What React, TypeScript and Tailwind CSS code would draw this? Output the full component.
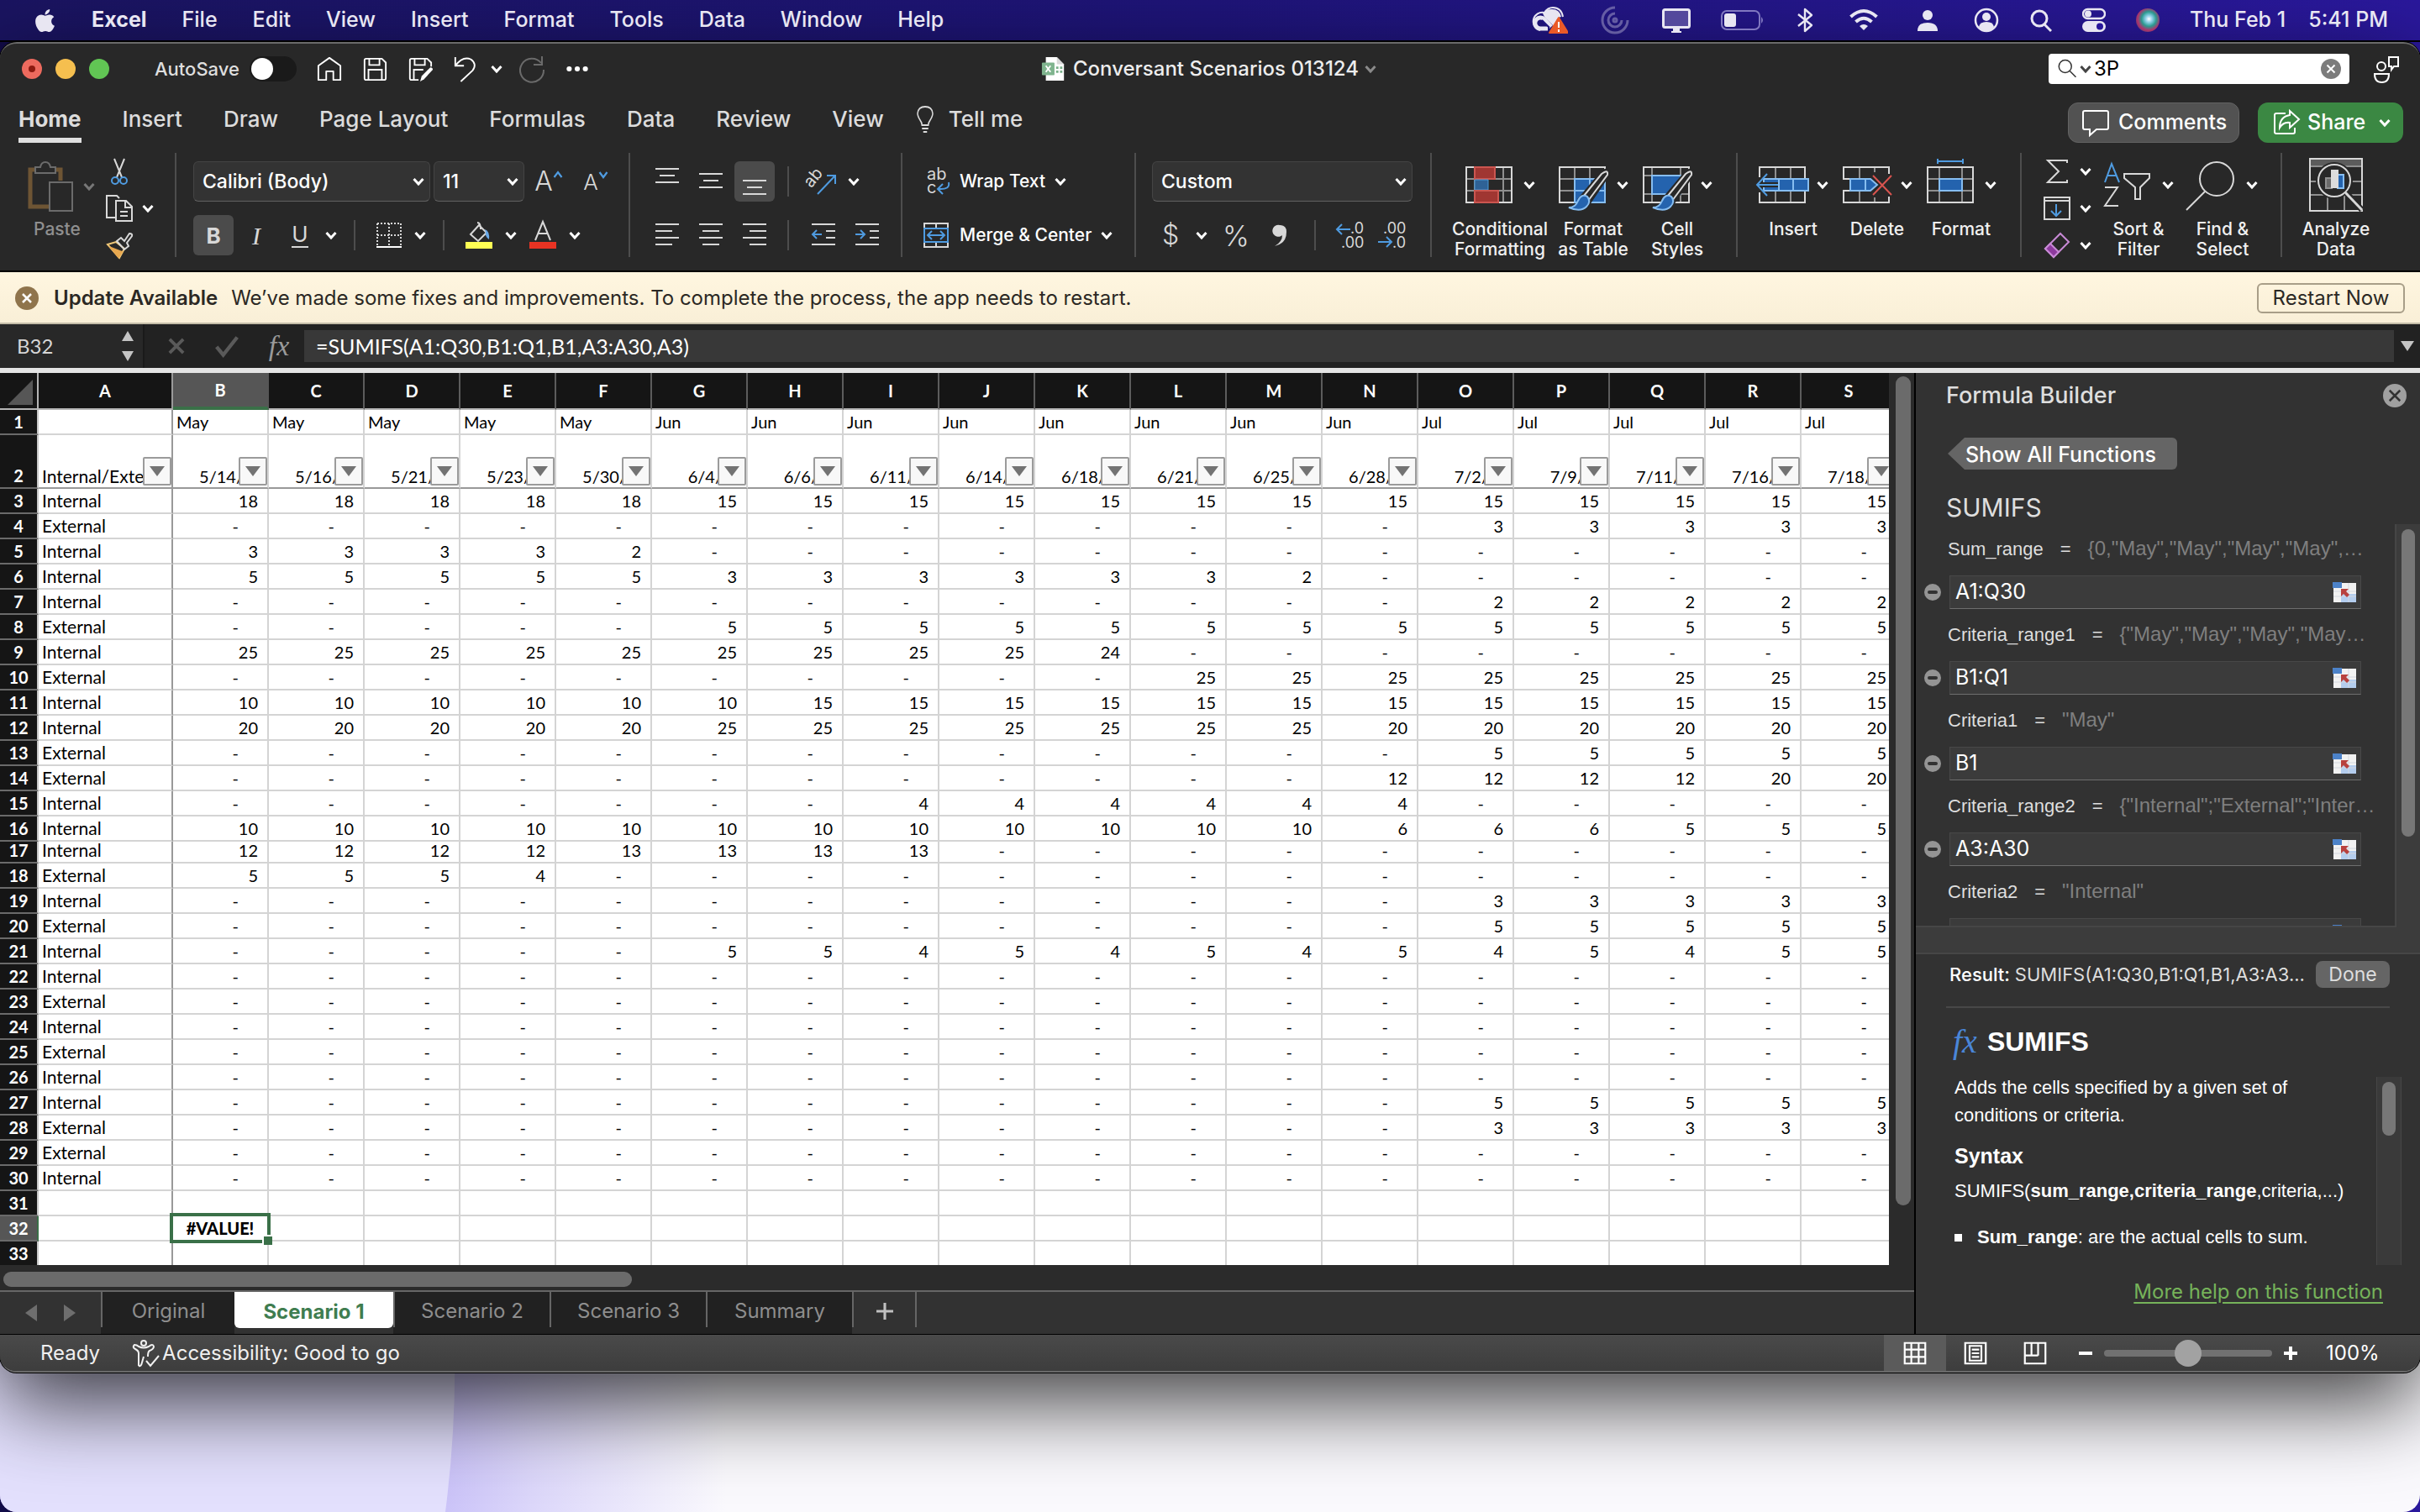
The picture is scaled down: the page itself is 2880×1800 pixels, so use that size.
import { useState, type ReactNode } from 'react';
import clsx from 'clsx';
import { FaApple } from 'react-icons/fa';

/* ------------------------------------------------------------------ */
/* Data                                                                */
/* ------------------------------------------------------------------ */

const MENUS = ['File', 'Edit', 'View', 'Insert', 'Format', 'Tools', 'Data', 'Window', 'Help'];

const RIBBON_TABS = ['Home', 'Insert', 'Draw', 'Page Layout', 'Formulas', 'Data', 'Review', 'View'];

const COLUMNS = 'BCDEFGHIJKLMNOPQRS'.split('');

const MONTHS = [
  'May', 'May', 'May', 'May', 'May',
  'Jun', 'Jun', 'Jun', 'Jun', 'Jun', 'Jun', 'Jun', 'Jun',
  'Jul', 'Jul', 'Jul', 'Jul', 'Jul',
];

const DATES = [
  '5/14/', '5/16/', '5/21/', '5/23/', '5/30/', '6/4/', '6/6/', '6/11/', '6/14/',
  '6/18/', '6/21/', '6/25/', '6/28/', '7/2/', '7/9/', '7/11/', '7/16/', '7/18/',
];

type Run = [value: number, count: number];

// each run is [value, number of columns], zero shows as a dash
const DATA: { row: number; kind: 'Internal' | 'External'; runs: Run[] }[] = [
  { row: 3, kind: 'Internal', runs: [[18, 5], [15, 13]] },
  { row: 4, kind: 'External', runs: [[0, 13], [3, 5]] },
  { row: 5, kind: 'Internal', runs: [[3, 4], [2, 1], [0, 13]] },
  { row: 6, kind: 'Internal', runs: [[5, 5], [3, 6], [2, 1], [0, 6]] },
  { row: 7, kind: 'Internal', runs: [[0, 13], [2, 5]] },
  { row: 8, kind: 'External', runs: [[0, 5], [5, 13]] },
  { row: 9, kind: 'Internal', runs: [[25, 9], [24, 1], [0, 8]] },
  { row: 10, kind: 'External', runs: [[0, 10], [25, 8]] },
  { row: 11, kind: 'Internal', runs: [[10, 6], [15, 12]] },
  { row: 12, kind: 'Internal', runs: [[20, 5], [25, 7], [20, 6]] },
  { row: 13, kind: 'External', runs: [[0, 13], [5, 5]] },
  { row: 14, kind: 'External', runs: [[0, 12], [12, 4], [20, 2]] },
  { row: 15, kind: 'Internal', runs: [[0, 7], [4, 6], [0, 5]] },
  { row: 16, kind: 'Internal', runs: [[10, 12], [6, 3], [5, 3]] },
  { row: 17, kind: 'Internal', runs: [[12, 4], [13, 4], [0, 10]] },
  { row: 18, kind: 'External', runs: [[5, 3], [4, 1], [0, 14]] },
  { row: 19, kind: 'Internal', runs: [[0, 13], [3, 5]] },
  { row: 20, kind: 'External', runs: [[0, 13], [5, 5]] },
  {
    row: 21,
    kind: 'Internal',
    runs: [[0, 5], [5, 2], [4, 1], [5, 1], [4, 1], [5, 1], [4, 1], [5, 1], [4, 1], [5, 1], [4, 1], [5, 2]],
  },
  { row: 22, kind: 'Internal', runs: [[0, 18]] },
  { row: 23, kind: 'External', runs: [[0, 18]] },
  { row: 24, kind: 'Internal', runs: [[0, 18]] },
  { row: 25, kind: 'External', runs: [[0, 18]] },
  { row: 26, kind: 'Internal', runs: [[0, 18]] },
  { row: 27, kind: 'Internal', runs: [[0, 13], [5, 5]] },
  { row: 28, kind: 'External', runs: [[0, 13], [3, 5]] },
  { row: 29, kind: 'External', runs: [[0, 18]] },
  { row: 30, kind: 'Internal', runs: [[0, 18]] },
];

const ARGUMENTS = [
  { name: 'Sum_range', preview: '{0,"May","May","May","May",…', value: 'A1:Q30' },
  { name: 'Criteria_range1', preview: '{"May","May","May","May…', value: 'B1:Q1' },
  { name: 'Criteria1', preview: '"May"', value: 'B1' },
  { name: 'Criteria_range2', preview: '{"Internal";"External";"Inter…', value: 'A3:A30' },
  { name: 'Criteria2', preview: '"Internal"', value: 'A3' },
];

const SHEETS = [
  { name: 'Original', width: 'w-[159px]' },
  { name: 'Scenario 1', width: 'w-[189px]' },
  { name: 'Scenario 2', width: 'w-[186px]' },
  { name: 'Scenario 3', width: 'w-[186px]' },
  { name: 'Summary', width: 'w-[174px]' },
];

/* ------------------------------------------------------------------ */
/* Small pieces                                                        */
/* ------------------------------------------------------------------ */

function Chevron({ className = 'text-white' }: { className?: string }) {
  return (
    <svg viewBox="0 0 20 20" className={clsx('size-5 shrink-0', className)} fill="none" stroke="currentColor" strokeWidth="3" aria-hidden="true">
      <path d="M4.5 7l5.5 6 5.5-6" />
    </svg>
  );
}

function Icon({ className = 'size-8', box = 32, children }: { className?: string; box?: number; children: ReactNode }) {
  return (
    <svg
      viewBox={`0 0 ${box} ${box}`}
      className={clsx('shrink-0 overflow-visible', className)}
      fill="none"
      stroke="currentColor"
      strokeWidth="2"
      aria-hidden="true"
    >
      {children}
    </svg>
  );
}

function Tool({ label, className = 'w-12', active = false, children }: { label: string; className?: string; active?: boolean; children: ReactNode }) {
  return (
    <button
      type="button"
      aria-label={label}
      className={clsx('flex h-12 shrink-0 items-center justify-center rounded-md text-[#d8d8d8]', active && 'bg-[#4b4b4b]', className)}
    >
      {children}
    </button>
  );
}

function More({ label }: { label: string }) {
  return (
    <button type="button" aria-label={label} className="flex h-12 w-6 shrink-0 items-center justify-center">
      <Chevron />
    </button>
  );
}

function MiniDivider() {
  return <div className="mx-[15px] h-9 w-[2px] shrink-0 bg-[#4d4d4d]" />;
}

function Group({ className, children }: { className?: string; children: ReactNode }) {
  return <div className={clsx('flex h-[124px] shrink-0 border-r-2 border-[#4d4d4d]', className)}>{children}</div>;
}

function BigTool({ lines, className = 'w-[100px]', menu = true, children }: { lines: string[]; className?: string; menu?: boolean; children: ReactNode }) {
  return (
    <button type="button" className={clsx('flex shrink-0 flex-col items-center gap-[9px] pt-[6px]', className)}>
      <span className="flex items-center gap-[6px] text-[#d8d8d8]">
        <Icon box={64} className="size-16">
          {children}
        </Icon>
        {menu && <Chevron />}
      </span>
      <span className="text-[21px] leading-6 font-medium text-[#f0f0f0]">
        {lines.map((line) => (
          <span key={line} className="block whitespace-nowrap">
            {line}
          </span>
        ))}
      </span>
    </button>
  );
}

function Lines({ rows }: { rows: [number, number, number][] }) {
  return (
    <Icon>
      {rows.map(([x1, x2, y]) => (
        <path key={y} d={`M${x1} ${y}H${x2}`} />
      ))}
    </Icon>
  );
}

function Brush() {
  return (
    <>
      <path d="M31 48L56 18q7-5 7 0L40 52z" fill="#282828" stroke="#282828" strokeWidth="6" />
      <path d="M34 45L55 19q8-6 7 1L39 51" fill="#282828" />
      <path d="M16 59q8 0 11-8 4-9 11-5 5 6-1 12-7 7-21 1z" fill="#2463ae" stroke="#86bdf0" />
    </>
  );
}

/* ------------------------------------------------------------------ */
/* macOS menu bar                                                      */
/* ------------------------------------------------------------------ */

function MenuBar() {
  return (
    <header className="flex h-[50px] items-center border-b-2 border-black bg-linear-to-r from-[#1a1460] via-[#1e1478] to-[#2a189c] pr-[38px] pl-[38px] text-[25px] font-medium text-[#e8e6f2]">
      <button type="button" aria-label="Apple menu" className="mr-10">
        <FaApple className="size-[31px]" />
      </button>
      <nav className="flex gap-[42px]">
        <button type="button" className="font-bold">Excel</button>
        {MENUS.map((menu) => (
          <button key={menu} type="button">
            {menu}
          </button>
        ))}
      </nav>
      <div className="ml-auto flex items-center gap-9">
        {/* Creative Cloud with a warning badge */}
        <svg viewBox="0 0 44 34" className="h-[34px] w-11" fill="none" stroke="currentColor" aria-hidden="true">
          <path d="M11 29a10.500 10.500 0 1 1 5-21q4-6 10-6 10 0 12 11" strokeWidth="2" />
          <path d="M14 9q4-5 11-5 9 0 11 9-6 0-8 12L16 13z" fill="currentColor" stroke="none" />
          <path d="M20 27h-9a6.500 6.500 0 1 1 5-11l8 9" strokeWidth="5" />
          <path d="M22 26L13 17" stroke="#1f1480" strokeWidth="2" />
          <path d="M33 14l11 18H22z" fill="#ea5a28" stroke="#ea5a28" strokeLinejoin="round" strokeWidth="2" />
          <path d="M33 19v7M33 28v3" stroke="#fff" strokeWidth="2" />
        </svg>
        <svg viewBox="0 0 40 34" className="h-[34px] w-10 opacity-35" fill="none" stroke="currentColor" strokeWidth="3" aria-hidden="true">
          <path d="M20 2a15 15 0 1 0 15 15M20 9a8 8 0 1 0 8 8" />
          <circle cx="20" cy="17" r="2" />
        </svg>
        <svg viewBox="0 0 34 32" className="h-8 w-[34px]" aria-hidden="true">
          <rect x="1.500" y="3.500" width="31" height="21" rx="2" fill="#54499c" stroke="currentColor" strokeWidth="3" />
          <path d="M13 25h8v4h2v2H11v-2h2z" fill="currentColor" />
        </svg>
        <svg viewBox="0 0 52 26" className="h-[26px] w-[52px]" aria-hidden="true">
          <rect x="1" y="2" width="45" height="22" rx="6" fill="none" stroke="#8078c0" strokeWidth="2" />
          <rect x="4" y="5" width="14" height="16" rx="3" fill="currentColor" />
          <path d="M48 9q4 4 0 8z" fill="#8078c0" />
        </svg>
        <svg viewBox="0 0 24 32" className="h-8 w-6" fill="none" stroke="currentColor" strokeWidth="2.400" strokeLinejoin="round" aria-hidden="true">
          <path d="M4 9l16 13-8 7V3l8 7L4 23" />
        </svg>
        <svg viewBox="0 0 44 32" className="h-8 w-11" fill="none" stroke="currentColor" strokeWidth="4" aria-hidden="true">
          <path d="M6.500 12q15.500-14 31 0M12.500 18q9.500-8.500 19 0" />
          <path d="M22 28l-5-5q5-4 10 0z" fill="currentColor" stroke="none" />
        </svg>
        <svg viewBox="0 0 36 32" className="h-8 w-9" fill="currentColor" aria-hidden="true">
          <circle cx="18" cy="10" r="6" />
          <path d="M6 29q0-10 12-10t12 10z" />
        </svg>
        <svg viewBox="0 0 32 32" className="size-8" fill="currentColor" aria-hidden="true">
          <circle cx="16" cy="16" r="13" fill="none" stroke="currentColor" strokeWidth="2.500" />
          <circle cx="16" cy="12" r="5" />
          <path d="M7 24q1-6 9-6t9 6q-4 5-9 5t-9-5z" />
        </svg>
        <svg viewBox="0 0 26 32" className="h-8 w-[26px]" fill="none" stroke="currentColor" strokeWidth="3" aria-hidden="true">
          <circle cx="11" cy="14" r="9" />
          <path d="M17 21l8 8" />
        </svg>
        <svg viewBox="0 0 28 32" className="h-8 w-7" aria-hidden="true">
          <rect x="1" y="3" width="26" height="11" rx="5.500" fill="none" stroke="currentColor" strokeWidth="2.400" />
          <circle cx="7" cy="8.500" r="4" fill="currentColor" />
          <rect x="0" y="17" width="28" height="13" rx="6.500" fill="currentColor" />
          <circle cx="21" cy="23.500" r="4" fill="#28179a" />
        </svg>
        <span className="size-7 rounded-full bg-[radial-gradient(circle_at_55%_45%,#ffffff_0%,#8fd0e8_18%,#2a9a90_40%,#b0306c_62%,#3a4a70_85%)]" />
        <span className="flex w-[236px] justify-between">
          <span>Thu Feb 1</span>
          <span>5:41 PM</span>
        </span>
      </div>
    </header>
  );
}

/* ------------------------------------------------------------------ */
/* Title bar and tabs                                                  */
/* ------------------------------------------------------------------ */

function TitleBar() {
  return (
    <div className="grid h-[60px] grid-cols-[1fr_auto_1fr] items-center">
      <div className="flex items-center pl-[26px]">
        <div className="flex gap-4">
          <button type="button" aria-label="Close" className="flex size-6 items-center justify-center rounded-full bg-[#ed6a5e]">
            <span className="size-2 rounded-full bg-[#8c1a10]" />
          </button>
          <button type="button" aria-label="Minimize" className="size-6 rounded-full bg-[#f5bf4f]" />
          <button type="button" aria-label="Zoom" className="size-6 rounded-full bg-[#61c554]" />
        </div>
        <label className="ml-[54px] flex items-center gap-3 text-[22px] font-medium text-[#dedede]">
          AutoSave
          <input type="checkbox" className="peer sr-only" />
          <span className="flex h-[30px] w-14 items-center rounded-full bg-[#1a1a1a] px-[2px]">
            <span className="size-[26px] rounded-full bg-white" />
          </span>
        </label>
        <div className="ml-6 flex items-center gap-6 text-white">
          <button type="button" aria-label="Home">
            <Icon className="size-[30px]">
              <path d="M2 12L16 2l14 10v18h-9V19h-9v11H2z" strokeLinejoin="round" />
            </Icon>
          </button>
          <button type="button" aria-label="Save">
            <Icon className="size-[30px]">
              <path d="M3 5q0-2 2-2h20l5 5v20q0 2-2 2H5q-2 0-2-2zM9 3v8h13V3M8 30V17h17v13" />
            </Icon>
          </button>
          <button type="button" aria-label="Save As">
            <Icon className="size-[30px]">
              <path d="M14 30H5q-2 0-2-2V5q0-2 2-2h20l5 5v5M9 3v8h13V3M8 30V17h12" />
              <path d="M16 32l2-7 11-11q3 0 3 3L21 29z" fill="currentColor" stroke="none" />
            </Icon>
          </button>
          <span className="-mr-2 flex items-center gap-3">
            <button type="button" aria-label="Undo">
              <Icon className="size-[30px]">
                <path d="M3 1v11h11M3 12q10-13 20-8 8 6 2 14L10 32" />
              </Icon>
            </button>
            <Chevron />
          </span>
          <button type="button" aria-label="Redo" className="text-[#6a6a6a]">
            <Icon>
              <path d="M28 1v10H18M27 9A14 14 0 1 0 30 17" />
            </Icon>
          </button>
          <button type="button" aria-label="More commands">
            <Icon className="size-7">
              <g fill="currentColor" stroke="none">
                <circle cx="5" cy="16" r="3.500" />
                <circle cx="16" cy="16" r="3.500" />
                <circle cx="27" cy="16" r="3.500" />
              </g>
            </Icon>
          </button>
        </div>
      </div>
      <button type="button" className="flex items-center gap-1 text-[24px] font-medium text-[#ededed]">
        <Icon className="mr-1 size-[30px]">
          <path d="M6 1h14l9 9v21H6z" fill="#fff" stroke="none" />
          <path d="M20 1l9 9h-9z" fill="#d8d8d8" stroke="none" />
          <path d="M19 13h3v3h-3zM24 13h3v3h-3zM19 18h3v3h-3zM24 18h3v3h-3z" fill="#7ab08a" stroke="none" />
          <rect x="1" y="8" width="16" height="16" rx="1" fill="#7fb48e" stroke="none" />
          <path d="M6 12l6 8M12 12l-6 8" stroke="#fff" />
        </Icon>
        Conversant Scenarios 013124
        <Chevron className="text-[#8a8a8a]" />
      </button>
      <div className="flex items-center justify-end gap-7 pr-6">
        <div className="flex h-9 w-[358px] items-center rounded bg-white px-[10px] text-[#333]">
          <Icon className="size-6">
            <circle cx="13" cy="12" r="10" />
            <path d="M20 19l10 10" />
          </Icon>
          <Chevron className="text-[#444]" />
          <input
            type="text"
            aria-label="Search workbook"
            defaultValue="3P"
            className="w-0 min-w-0 flex-1 text-[24px] text-black outline-none"
          />
          <button type="button" aria-label="Clear search" className="flex size-6 items-center justify-center rounded-full bg-[#7c7c7c] text-white">
            <Icon className="size-4">
              <path d="M7 7l18 18M25 7L7 25" strokeWidth="4" />
            </Icon>
          </button>
        </div>
        <button type="button" aria-label="Share presence" className="text-white">
          <Icon>
            <circle cx="10" cy="13" r="5" />
            <path d="M2 22h17q0 10-8.500 10T2 22zM19 2h11v11h-5l-3 4v-4h-3z" />
          </Icon>
        </button>
      </div>
    </div>
  );
}

function RibbonTabs({ active, onSelect }: { active: string; onSelect: (tab: string) => void }) {
  return (
    <div className="flex h-[70px] items-start justify-between pt-[10px]">
      <nav className="flex gap-[49px] pl-[22px] text-[26px] leading-10 font-medium text-[#dcdcdc]">
        {RIBBON_TABS.map((tab) => (
          <button
            key={tab}
            type="button"
            onClick={() => onSelect(tab)}
            className={clsx('border-b-6 pb-[2px]', tab === active ? 'border-[#e0e0e0] font-bold' : 'border-transparent')}
          >
            {tab}
          </button>
        ))}
        <button type="button" className="-ml-4 flex h-10 items-center gap-3">
          <Icon>
            <path d="M11 23q0-3-3-6-4-5-4-8Q5 1 16 1t12 8q0 3-4 8-3 3-3 6zM11 27h10M13 31h6" transform="translate(4) scale(.75 1)" />
          </Icon>
          Tell me
        </button>
      </nav>
      <div className="flex gap-[22px] pr-5 text-[25px] font-medium text-white">
        <button type="button" className="flex h-12 w-[204px] items-center gap-[11px] rounded-xl border border-[#636363] bg-[#525252] pl-4">
          <Icon>
            <path d="M3 2h26q2 0 2 2v18q0 2-2 2H17l-8 7v-7H3q-2 0-2-2V4q0-2 2-2z" />
          </Icon>
          Comments
        </button>
        <button type="button" className="flex h-12 w-[173px] items-center gap-[9px] rounded-xl bg-[#3b8843] pl-[18px]">
          <Icon>
            <path d="M15 5H4q-2 0-2 2v20q0 2 2 2h20q2 0 2-2v-5M20 2l11 10-11 10v-6q-8-1-12 6 0-13 12-15z" />
          </Icon>
          Share
          <Chevron className="ml-1" />
        </button>
      </div>
    </div>
  );
}

/* ------------------------------------------------------------------ */
/* Ribbon                                                              */
/* ------------------------------------------------------------------ */

function SelectBox({ label, value, className }: { label: string; value: string; className: string }) {
  return (
    <div className={clsx('relative h-12 shrink-0', className)}>
      <select
        aria-label={label}
        defaultValue={value}
        className="h-full w-full appearance-none rounded-md border border-[#444] border-b-[#606060] bg-[#333] pl-[10px] text-[23px] font-medium text-white"
      >
        <option>{value}</option>
      </select>
      <div className="pointer-events-none absolute inset-y-0 right-1 flex items-center">
        <Chevron />
      </div>
    </div>
  );
}

function Ribbon() {
  return (
    <div className="flex h-[142px] border-b-2 border-black">
      {/* Clipboard */}
      <Group className="w-[210px] gap-[10px] pl-8">
        <button type="button" className="flex w-[84px] flex-col items-start gap-[9px] pt-[10px] text-[21px] leading-6 font-medium text-[#8f8f8f]">
          <span className="flex h-[60px] items-center gap-1">
            <Icon box={60} className="size-[60px] text-[#6b6b6b]">
              <path d="M9 10H4v44h24" stroke="#6e5534" strokeWidth="5" />
              <path d="M34 10h6v13" stroke="#6e5534" strokeWidth="5" />
              <path d="M10 14V7h6q1-6 6-6t6 6h6v7z" />
              <path d="M27 25h27v34H27z" fill="#282828" />
            </Icon>
            <Chevron className="text-[#777]" />
          </span>
          <span className="pl-2">Paste</span>
        </button>
        <div className="flex flex-col gap-3 pt-[6px] text-[#d8d8d8]">
          <button type="button" aria-label="Cut">
            <Icon>
              <path d="M10 1l9 22M22 1l-9 22" />
              <g stroke="#4f9be0">
                <circle cx="11" cy="27" r="4" />
                <circle cx="21" cy="27" r="4" />
              </g>
            </Icon>
          </button>
          <button type="button" aria-label="Copy" className="flex items-center gap-2">
            <Icon>
              <path d="M11 27H1V1h12l3 3M12 7h12l7 7v17H12zM23 7v8h8M17 20h9M17 25h9" />
            </Icon>
            <Chevron />
          </button>
          <button type="button" aria-label="Format Painter">
            <Icon>
              <path d="M2 15l10-3 10 8-6 11z" stroke="#f0c878" />
              <path d="M6 19l13 5-4 6z" fill="#e8a850" stroke="#e8a850" />
              <path d="M13 11l5-4 4 4 6-9q4 0 3 3l-6 8 2 4-5 4z" />
            </Icon>
          </button>
        </div>
      </Group>

      {/* Font */}
      <Group className="w-[540px] flex-col gap-4 pt-[10px] pl-5">
        <div className="flex">
          <SelectBox label="Font" value="Calibri (Body)" className="mr-1 w-[282px]" />
          <SelectBox label="Font size" value="11" className="w-[108px]" />
          <Tool label="Increase font size" className="w-[58px] text-[32px] font-light">
            A
            <Icon className="mb-4 size-3">
              <path d="M4 24L16 8l12 16" stroke="#4f9be0" strokeWidth="6" />
            </Icon>
          </Tool>
          <Tool label="Decrease font size" className="w-[54px] text-[26px] font-light">
            A
            <Icon className="mb-4 size-3">
              <path d="M4 8l12 16L28 8" stroke="#4f9be0" strokeWidth="6" />
            </Icon>
          </Tool>
        </div>
        <div className="flex items-center">
          <Tool label="Bold" active className="w-12 text-[26px] font-bold">B</Tool>
          <Tool label="Italic" className="w-[54px] font-['Liberation_Serif',serif] text-[30px] italic">I</Tool>
          <Tool label="Underline" className="w-[50px] text-[26px]">
            <span className="border-b-2 border-[#d8d8d8] leading-7">U</span>
          </Tool>
          <More label="Underline styles" />
          <MiniDivider />
          <Tool label="Borders" className="w-[50px]">
            <Icon>
              <path d="M2 2h28M2 16h28M2 2v27M16 2v27M30 2v27" strokeDasharray="2 2" />
              <path d="M1 30h30" stroke="#fff" />
            </Icon>
          </Tool>
          <More label="Border styles" />
          <MiniDivider />
          <Tool label="Fill colour" className="w-[52px]">
            <Icon>
              <path d="M14 1q4 0 4 8M16 4L6 15l9 8 10-10z" />
              <path d="M23 9q6 2 5 12-5-3-4-9z" fill="#6aa9e8" stroke="none" />
              <path d="M0 24h32v8H0z" fill="#ffff54" stroke="none" />
            </Icon>
          </Tool>
          <More label="Fill colours" />
          <Tool label="Font colour" className="w-[52px]">
            <Icon>
              <path d="M7 22L16 0l9 22M10 14h12" />
              <path d="M0 24h32v8H0z" fill="#e93323" stroke="none" />
            </Icon>
          </Tool>
          <More label="Font colours" />
        </div>
      </Group>

      {/* Alignment */}
      <Group className="w-[324px] flex-col gap-4 pt-[10px] pl-5">
        <div className="flex items-center">
          <div className="flex gap-1">
            <Tool label="Top align">
              <Lines rows={[[2, 30, 1], [7, 25, 9], [2, 30, 17]]} />
            </Tool>
            <Tool label="Middle align">
              <Lines rows={[[2, 30, 7], [7, 25, 15], [2, 30, 23]]} />
            </Tool>
            <Tool label="Bottom align" active>
              <Lines rows={[[2, 30, 15], [7, 25, 23], [2, 30, 31]]} />
            </Tool>
          </div>
          <MiniDivider />
          <Tool label="Orientation" className="w-[50px]">
            <Icon>
              <text x="0" y="20" transform="rotate(-50 6 20)" className="text-[20px]" fill="currentColor" stroke="none">ab</text>
              <path d="M10 31L31 9M21 9h10v10" stroke="#4f9be0" />
            </Icon>
          </Tool>
          <More label="Orientations" />
        </div>
        <div className="flex items-center">
          <div className="flex gap-1">
            <Tool label="Align left">
              <Lines rows={[[2, 30, 3], [2, 22, 11], [2, 30, 19], [2, 22, 27]]} />
            </Tool>
            <Tool label="Centre">
              <Lines rows={[[2, 30, 3], [6, 26, 11], [2, 30, 19], [6, 26, 27]]} />
            </Tool>
            <Tool label="Align right">
              <Lines rows={[[2, 30, 3], [10, 30, 11], [2, 30, 19], [10, 30, 27]]} />
            </Tool>
          </div>
          <MiniDivider />
          <Tool label="Decrease indent" className="w-[52px]">
            <Icon>
              <path d="M2 3h28M19 11h11M19 19h11M2 27h28" />
              <path d="M14 15H3M8 10l-5 5 5 5" stroke="#4f9be0" />
            </Icon>
          </Tool>
          <Tool label="Increase indent" className="w-[52px]">
            <Icon>
              <path d="M2 3h28M19 11h11M19 19h11M2 27h28" />
              <path d="M2 15h11M8 10l5 5-5 5" stroke="#4f9be0" />
            </Icon>
          </Tool>
        </div>
      </Group>

      <Group className="w-[278px] flex-col gap-4 pt-[10px] pl-6 text-[21px] font-medium text-white">
        <button type="button" className="flex h-12 items-center gap-2">
          <Icon className="mr-1 size-8 text-[#d8d8d8]">
            <text x="5" y="14" className="text-[20px] font-normal" fill="currentColor" stroke="none">ab</text>
            <text x="5" y="30" className="text-[20px] font-normal" fill="currentColor" stroke="none">c</text>
            <path d="M31 17q2 9-12 8M24 19l-6 6 6 6" stroke="#4f9be0" />
          </Icon>
          Wrap Text
          <Chevron />
        </button>
        <button type="button" className="flex h-12 items-center gap-2">
          <Icon className="mr-1 size-8 text-[#d8d8d8]">
            <path d="M2 2h28v28H2zM16 2v6M16 24v6" />
            <path d="M2 8h28v16H2zM6 16h20M11 11l-5 5 5 5M21 11l5 5-5 5" stroke="#4f9be0" />
          </Icon>
          Merge &amp; Center
          <Chevron />
        </button>
      </Group>

      {/* Number */}
      <Group className="w-[352px] flex-col gap-4 pt-[10px] pl-[19px]">
        <SelectBox label="Number format" value="Custom" className="w-[310px]" />
        <div className="flex items-center">
          <Tool label="Accounting format" className="w-11 text-[32px] font-light">$</Tool>
          <span className="w-[3px]" />
          <More label="Currencies" />
          <span className="w-[3px]" />
          <Tool label="Percent style" className="w-[52px] text-[34px] font-light">%</Tool>
          <Tool label="Comma style" className="w-[52px]">
            <Icon>
              <path d="M16 4a7 7 0 1 0 3 12q0 8-9 13 14-3 14-17 0-8-8-8z" fill="currentColor" stroke="none" />
            </Icon>
          </Tool>
          <MiniDivider />
          <Tool label="Increase decimal" className="w-[50px]">
            <Icon>
              <text x="17" y="14" className="text-[18px]" fill="currentColor" stroke="none">.0</text>
              <text x="6" y="31" className="text-[18px]" fill="currentColor" stroke="none">.00</text>
              <path d="M17 9H1M7 3L1 9l6 6" stroke="#4f9be0" />
            </Icon>
          </Tool>
          <Tool label="Decrease decimal" className="w-[50px]">
            <Icon>
              <text x="6" y="14" className="text-[18px]" fill="currentColor" stroke="none">.00</text>
              <text x="17" y="31" className="text-[18px]" fill="currentColor" stroke="none">.0</text>
              <path d="M0 24h16M10 18l6 6-6 6" stroke="#4f9be0" />
            </Icon>
          </Tool>
        </div>
      </Group>

      {/* Styles */}
      <Group className="w-[364px] pl-5">
        <BigTool lines={['Conditional', 'Formatting']} className="w-[122px]">
          <path d="M15 11v42M49 11v42M5 25h54M5 39h54" stroke="#8f8f8f" />
          <path d="M5 11h54v42H5z" />
          <path d="M15 11h24v14H15z" fill="#a03632" stroke="#cb5650" />
          <path d="M15 26h16v12H15z" fill="#2f6296" stroke="#4a9bd8" strokeWidth="1" />
          <path d="M15 39h28v14H15z" fill="#a03632" stroke="#cb5650" />
        </BigTool>
        <BigTool lines={['Format', 'as Table']}>
          <path d="M23 11v42M41 11v42M5 25h54M5 39h54" stroke="#8f8f8f" />
          <path d="M5 11h54v42H5z" />
          <path d="M23 25h36v28H23zM41 25v28M23 39h36" fill="#2463ae" stroke="#86bdf0" />
          <Brush />
        </BigTool>
        <BigTool lines={['Cell', 'Styles']}>
          <path d="M15 11v42M49 11v42M5 21h54M5 43h54" stroke="#8f8f8f" />
          <path d="M5 11h54v42H5z" />
          <path d="M15 21h34v22H15z" fill="#2463ae" stroke="#86bdf0" />
          <Brush />
        </BigTool>
      </Group>

      {/* Cells */}
      <Group className="w-[338px] pl-4">
        <BigTool lines={['Insert']}>
          <path d="M24 11v42M42 11v42" stroke="#8f8f8f" />
          <path d="M5 23V11h54v42H5V41" />
          <path d="M10 25h53v14H10zM28 25v14M45 25v14" fill="#2463ae" stroke="#86bdf0" />
          <path d="M27 32H4" stroke="#282828" strokeWidth="6" />
          <path d="M27 32H2M14 19L2 32l12 13" stroke="#4f9be0" />
        </BigTool>
        <BigTool lines={['Delete']}>
          <path d="M24 11v42M42 11v6M42 47v6" stroke="#8f8f8f" />
          <path d="M59 19v-8H5v14h9M59 46v7H5V39h9" />
          <path d="M13 25h24l8 7-8 7H13zM31 25v14" fill="#2463ae" stroke="#86bdf0" />
          <path d="M40 21l22 23M62 21L40 44" stroke="#d9544f" />
        </BigTool>
        <BigTool lines={['Format']}>
          <path d="M19 11v42M46 11v42M5 25h54M5 39h54" stroke="#8f8f8f" />
          <path d="M5 11h54v42H5z" />
          <path d="M19 25h27v14H19z" fill="#2463ae" stroke="#86bdf0" />
          <path d="M17 4h30M17 1v6M47 1v6" stroke="#4f9be0" />
        </BigTool>
      </Group>

      {/* Editing */}
      <Group className="w-[310px] pl-[26px]">
        <div className="flex w-[63px] flex-col gap-3 pt-[6px] text-[#d8d8d8]">
          <button type="button" aria-label="AutoSum" className="flex items-center gap-2">
            <Icon>
              <path d="M28 6V3H5l13 13L5 29h23v-3" />
            </Icon>
            <Chevron />
          </button>
          <button type="button" aria-label="Fill" className="flex items-center gap-2">
            <Icon>
              <path d="M1 3h30v26H1zM1 7h30" />
              <path d="M15 11v14M9 19l6 6 6-6" stroke="#4f9be0" />
            </Icon>
            <Chevron />
          </button>
          <button type="button" aria-label="Clear" className="flex items-center gap-2">
            <Icon>
              <path d="M20 2l10 10-18 18L2 20z" stroke="#c88ad6" />
              <path d="M8 14l10 10-6 6L2 20z" fill="#8d3a9e" stroke="#c88ad6" />
            </Icon>
            <Chevron />
          </button>
        </div>
        <BigTool lines={['Sort &', 'Filter']}>
          <path d="M5 29L13 7l9 22M8 21h11" stroke="#4f9be0" />
          <path d="M5 35h15L5 57h16" />
          <path d="M28 19h30v5L47 35v14h-6V35L28 24z" />
        </BigTool>
        <BigTool lines={['Find &', 'Select']}>
          <circle cx="38" cy="25" r="20" />
          <path d="M24 40L2 62" />
        </BigTool>
      </Group>

      <div className="flex flex-1 pl-[14px]">
        <BigTool lines={['Analyze', 'Data']} menu={false}>
          <path d="M1 1h62v9H1z" fill="#5c5c5c" stroke="none" />
          <path d="M1 10h62M1 28h62M1 44h62M22 44v19M42 44v19" stroke="#8f8f8f" />
          <path d="M1 1h62v62H1z" />
          <circle cx="30" cy="27" r="22" fill="#282828" stroke="none" />
          <circle cx="30" cy="27" r="19" />
          <path d="M20 24h7v12h-7z" fill="#6a6a6a" stroke="#8f8f8f" />
          <path d="M34 20h7v16h-7z" fill="#2463ae" stroke="#86bdf0" />
          <path d="M26 14h9v22h-9z" fill="#dcdcdc" stroke="none" />
          <path d="M44 41l19 21" stroke="#282828" strokeWidth="7" />
          <path d="M43 41l20 21" strokeWidth="3" />
        </BigTool>
      </div>
    </div>
  );
}

/* ------------------------------------------------------------------ */
/* Update notice and formula bar                                       */
/* ------------------------------------------------------------------ */

function UpdateNotice() {
  return (
    <div className="flex h-[62px] items-center border-b-2 border-[#c4bda8] bg-linear-to-b from-[#fff6e0] to-[#f9efd7] px-[18px] pt-[2px] text-[24px] text-[#2b2824]">
      <button type="button" aria-label="Dismiss" className="flex size-7 items-center justify-center rounded-full bg-[#8f744c] text-white">
        <Icon className="size-5">
          <path d="M8 8l16 16M24 8L8 24" strokeWidth="4" />
        </Icon>
      </button>
      <strong className="ml-[18px] font-semibold">Update Available</strong>
      <p className="ml-4">We’ve made some fixes and improvements. To complete the process, the app needs to restart.</p>
      <button type="button" className="ml-auto h-9 w-[176px] rounded-md border-2 border-[#a89e88] text-[24px] leading-8">
        Restart Now
      </button>
    </div>
  );
}

function FormulaBar() {
  return (
    <div className="flex h-[58px] items-center border-b-6 border-[#e4e4e4] bg-[#222] font-['Lato',sans-serif] text-[#d6d6d6]">
      <div className="flex h-full w-[172px] items-center border-r-2 border-[#1a1a1a] bg-[#282828] pr-[10px] pl-5">
        <input type="text" aria-label="Name box" defaultValue="B32" className="w-0 flex-1 text-[24px] outline-none" />
        <svg viewBox="0 0 16 36" className="h-9 w-4" fill="#c4c4c4" aria-hidden="true">
          <path d="M8 0l7 12H1zM8 36l7-12H1z" />
        </svg>
      </div>
      <button type="button" aria-label="Cancel" className="ml-7 text-[#5a5a5a]">
        <Icon className="size-5">
          <path d="M3 3l26 26M29 3L3 29" strokeWidth="6" />
        </Icon>
      </button>
      <button type="button" aria-label="Enter" className="ml-9 text-[#5a5a5a]">
        <Icon className="size-7">
          <path d="M2 17l9 11L30 4" strokeWidth="5" />
        </Icon>
      </button>
      <button type="button" aria-label="Insert function" className="ml-8 w-8 font-['Liberation_Serif',serif] text-[34px] leading-9 text-[#9a9a9a] italic">
        fx
      </button>
      <input
        type="text"
        aria-label="Formula"
        defaultValue="=SUMIFS(A1:Q30,B1:Q1,B1,A3:A30,A3)"
        className="ml-[14px] h-[38px] min-w-0 flex-1 bg-[#383838] pl-[14px] text-[25px] text-white outline-none"
      />
      <button type="button" aria-label="Expand formula bar" className="flex w-[31px] justify-center">
        <svg viewBox="0 0 16 12" className="h-3 w-4" fill="#c4c4c4" aria-hidden="true">
          <path d="M0 0h16L8 12z" />
        </svg>
      </button>
    </div>
  );
}

/* ------------------------------------------------------------------ */
/* Sheet                                                               */
/* ------------------------------------------------------------------ */

function FilterButton({ column }: { column: string }) {
  return (
    <button
      type="button"
      aria-label={`Filter column ${column}`}
      className="relative flex h-[34px] w-[34px] shrink-0 items-center justify-center rounded-xs border-2 border-[#9b9b9b] bg-[#f8f8f8]"
    >
      <svg viewBox="0 0 18 12" className="h-3 w-[18px]" fill="#737373" aria-hidden="true">
        <path d="M0 0h18L9 12z" />
      </svg>
    </button>
  );
}

function RowHead({ row, active = false, last = false }: { row: number; active?: boolean; last?: boolean }) {
  return (
    <th
      scope="row"
      className={clsx(
        'border-r-2 p-0 pb-1 text-center align-bottom text-[20px] leading-5 font-bold text-white',
        active ? 'border-r-[#3a7048] bg-[#565656]' : 'border-r-[#c8c8c8] bg-[#151515]',
        !last && 'border-b-2 border-b-[#6a6a6a]',
      )}
    >
      {row}
    </th>
  );
}

const CELL = 'border-r-2 border-b-2 border-[#d4d4d4] p-0 pb-1 align-bottom text-[20px] leading-5';
const LABEL_CELL = 'border-r-2 border-b-2 border-r-[#999] border-b-[#d4d4d4] p-0 pb-1 pl-1 align-bottom text-[21px] leading-5';

function Sheet() {
  return (
    <div className="min-w-0 flex-1 overflow-hidden bg-white">
      <table className="w-[2258px] table-fixed border-separate border-spacing-0 font-['Lato',sans-serif] text-black">
        <colgroup>
          <col className="w-[46px]" />
          <col className="w-[160px]" />
          {COLUMNS.map((column) => (
            <col key={column} className="w-[114px]" />
          ))}
        </colgroup>
        <thead>
          <tr className="h-11 bg-[#151515] text-[20px] text-white">
            <th className="border-r-2 border-b-2 border-[#b5b5b5] p-0">
              <svg viewBox="0 0 44 40" className="block h-10 w-11" fill="#565656" aria-label="Select all">
                <path d="M39 7v30H9z" />
              </svg>
            </th>
            <th scope="col" className="border-r-2 border-b-2 border-r-[#999] border-b-[#b5b5b5] p-0">A</th>
            {COLUMNS.map((column) => (
              <th
                key={column}
                scope="col"
                className={clsx(
                  'border-r-2 p-0',
                  column === 'B'
                    ? 'border-b-4 border-r-[#565656] border-b-[#3a7048] bg-[#565656]'
                    : 'border-b-2 border-r-[#5c5c5c] border-b-[#b5b5b5]',
                )}
              >
                {column}
              </th>
            ))}
          </tr>
        </thead>
        <tbody>
          <tr className="h-[30px]">
            <RowHead row={1} />
            <td className={LABEL_CELL} />
            {MONTHS.map((month, i) => (
              <td key={i} className={clsx(CELL, 'pl-1')}>
                {month}
              </td>
            ))}
          </tr>
          <tr className="h-16">
            <RowHead row={2} />
            <td className="border-r-2 border-b-2 border-[#999] p-0 pb-[2px] pl-1 align-bottom text-[21px] leading-[22px]">
              <div className="flex items-end">
                <span className="min-w-0 flex-1 overflow-hidden">Internal/External</span>
                <FilterButton column="A" />
              </div>
            </td>
            {DATES.map((date, i) => (
              <td key={date} className="border-r-2 border-b-2 border-r-[#d4d4d4] border-b-[#999] p-0 pb-[2px] align-bottom text-[20px] leading-[22px]">
                <div className="flex items-end justify-end">
                  <span className="-mr-[6px]">{date}</span>
                  <FilterButton column={COLUMNS[i]} />
                </div>
              </td>
            ))}
          </tr>
          {DATA.map(({ row, kind, runs }) => (
            <tr key={row} className={row === 17 ? 'h-[26px]' : 'h-[30px]'}>
              <RowHead row={row} />
              <td className={LABEL_CELL}>{kind}</td>
              {runs
                .flatMap(([value, count]) => Array<number>(count).fill(value))
                .map((value, i) => (
                  <td key={i} className={clsx(CELL, 'text-right', value ? 'pr-[11px]' : 'pr-[34px]')}>
                    {value || '-'}
                  </td>
                ))}
            </tr>
          ))}
          <tr className="h-[30px]">
            <RowHead row={31} />
            <td className={LABEL_CELL} />
            {COLUMNS.map((column) => (
              <td key={column} className={CELL} />
            ))}
          </tr>
          <tr className="h-[30px]">
            <RowHead row={32} active />
            <td className={LABEL_CELL} />
            <td className={clsx(CELL, 'relative text-center font-black')}>
              #VALUE!
              <div className="absolute -top-1 -right-1 -bottom-1 -left-1 border-4 border-[#3a7048]" />
              <div className="absolute -right-[6px] -bottom-[6px] size-3 border-t-2 border-l-2 border-white bg-[#3a7048]" />
            </td>
            {COLUMNS.slice(1).map((column) => (
              <td key={column} className={CELL} />
            ))}
          </tr>
          <tr className="h-7">
            <RowHead row={33} last />
            <td className="border-r-2 border-[#999] p-0" />
            {COLUMNS.map((column) => (
              <td key={column} className="border-r-2 border-[#d4d4d4] p-0" />
            ))}
          </tr>
        </tbody>
      </table>
    </div>
  );
}

function SheetTabs({ active, onSelect }: { active: string; onSelect: (name: string) => void }) {
  return (
    <div className="flex h-[52px] border-t-2 border-[#666] bg-[#323232] text-[24px] text-[#8e8e8e]">
      <div className="flex w-[120px] items-center justify-center gap-8">
        <button type="button" aria-label="Previous sheet">
          <svg viewBox="0 0 14 20" className="h-5 w-[14px]" fill="#6e6e6e" aria-hidden="true">
            <path d="M14 0v20L0 10z" />
          </svg>
        </button>
        <button type="button" aria-label="Next sheet">
          <svg viewBox="0 0 14 20" className="h-5 w-[14px]" fill="#6e6e6e" aria-hidden="true">
            <path d="M0 0v20l14-10z" />
          </svg>
        </button>
      </div>
      {SHEETS.map(({ name, width }) => (
        <div key={name} className={clsx('shrink-0', width, name === active ? 'bg-[#323232]' : 'bg-[#212121]')}>
          <button
            type="button"
            onClick={() => onSelect(name)}
            className={clsx(
              'w-full pt-1',
              name === active
                ? 'h-[43px] rounded-b-md bg-white font-bold text-[#3f7d50]'
                : 'h-[42px] border-l-2 border-[#666]',
            )}
          >
            {name}
          </button>
        </div>
      ))}
      <button type="button" aria-label="Add sheet" className="flex h-[42px] w-[77px] items-center justify-center border-x-2 border-[#666] pt-1 text-[#c0c0c0]">
        <Icon className="size-5">
          <path d="M16 0v32M0 16h32" strokeWidth="5" />
        </Icon>
      </button>
    </div>
  );
}

/* ------------------------------------------------------------------ */
/* Formula Builder                                                     */
/* ------------------------------------------------------------------ */

function Argument({ name, preview, value }: { name: string; preview: string; value: string }) {
  return (
    <div className="mb-[14px] pr-10 pl-[10px]">
      <label htmlFor={`arg-${name}`} className="flex h-8 items-center gap-5 pl-7 font-['Liberation_Sans',sans-serif] text-[22px] whitespace-nowrap text-[#dedede]">
        <span>{name}</span>
        <span>=</span>
        <span className="text-[24px] text-[#7f7f7f]">{preview}</span>
      </label>
      <div className="mt-4 flex items-center gap-[10px]">
        <button type="button" aria-label={`Remove ${name}`} className="flex size-5 items-center justify-center rounded-full bg-[#949494]">
          <span className="h-1 w-3 rounded-full bg-[#323232]" />
        </button>
        <div className="flex h-10 min-w-0 flex-1 items-center border border-[#484848] border-b-[#6e6e6e] bg-[#3b3b3b] pr-[5px] pl-[6px]">
          <input id={`arg-${name}`} type="text" defaultValue={value} className="w-0 flex-1 text-[25px] text-white outline-none" />
          <button type="button" aria-label={`Pick cells for ${name}`}>
            <svg viewBox="0 0 28 25" className="h-[25px] w-7" aria-hidden="true">
              <path d="M1 1h27v23H1z" fill="#f2f2f2" />
              <path d="M10 14h18v10H10z" fill="#b4cdee" />
              <path d="M1 11h27M1 17h27M19 1v23" stroke="#d4d8e0" />
              <path d="M0 0h11v7H0z" fill="#4c82c8" />
              <path d="M10 8h9l-3 3 4 4-3 3-4-4-3 3z" fill="#b8413e" />
            </svg>
          </button>
        </div>
      </div>
    </div>
  );
}

function FormulaBuilder() {
  return (
    <aside className="flex w-[602px] shrink-0 flex-col border-l-2 border-black bg-[#323232] text-[#dedede]">
      <div className="flex h-[54px] items-center justify-between pr-4 pl-9">
        <h2 className="text-[27px] font-medium">Formula Builder</h2>
        <button type="button" aria-label="Close pane" className="flex size-7 items-center justify-center rounded-full bg-[#a0a0a0] text-[#323232]">
          <Icon className="size-5">
            <path d="M6 6l20 20M26 6L6 26" strokeWidth="4" />
          </Icon>
        </button>
      </div>
      <button
        type="button"
        className="mt-[23px] ml-[38px] h-[38px] w-[273px] rounded-md bg-[#656565] pt-[2px] pr-1 text-[25px] leading-8 font-medium whitespace-nowrap text-white [clip-path:polygon(0_50%,20px_0,100%_0,100%_100%,20px_100%)]"
      >
        Show All Functions
      </button>
      <h3 className="mt-[25px] pl-9 text-[30px] leading-10">SUMIFS</h3>
      <div className="flex h-[480px] overflow-hidden">
        <div className="min-w-0 flex-1 overflow-hidden border-b-2 border-[#464646] pt-[13px]">
          {ARGUMENTS.map((argument) => (
            <Argument key={argument.name} {...argument} />
          ))}
        </div>
        <div className="w-[30px] border-l-2 border-[#464646] bg-[#3c3c3c] px-[6px] pt-[6px]">
          <div className="h-[366px] w-4 rounded-full bg-[#777]" />
        </div>
      </div>
      <div className="h-8 border-b-2 border-[#464646] bg-[#3c3c3c]" />
      <div className="flex h-12 items-center justify-between pr-9 pl-10 text-[22px]">
        <p className="whitespace-nowrap">
          <span className="font-medium text-white">Result: </span>
          SUMIFS(A1:Q30,B1:Q1,B1,A3:A3...
        </p>
        <button type="button" className="h-8 w-[88px] shrink-0 rounded-lg bg-[#656565] text-[23px] leading-8">
          Done
        </button>
      </div>
      <hr className="mx-9 mt-[14px] border-t-2 border-[#484848]" />
      <div className="mt-4 flex h-12 items-center gap-3 pl-11">
        <span className="font-['Liberation_Serif',serif] text-[40px] leading-10 text-[#4a86d8] italic">fx</span>
        <h3 className="font-['Liberation_Sans',sans-serif] text-[32px] font-bold text-white">SUMIFS</h3>
      </div>
      <div className="mt-[14px] flex h-[228px] justify-between overflow-hidden pr-[22px] pl-[46px] font-['Liberation_Sans',sans-serif] text-[22px] leading-8 text-white">
        <div>
          <p className="w-[440px] leading-[33px]">Adds the cells specified by a given set of conditions or criteria.</p>
          <h4 className="mt-4 text-[25px] font-bold">Syntax</h4>
          <p className="mt-[10px]">
            SUMIFS(<strong>sum_range,criteria_range</strong>,criteria,...)
          </p>
          <ul className="mt-[23px]">
            <li className="flex items-center gap-[18px]">
              <span className="size-[9px] bg-white" />
              <span>
                <strong>Sum_range</strong>: are the actual cells to sum.
              </span>
            </li>
          </ul>
        </div>
        <div className="mt-1 w-[30px] border-x border-[#464646] bg-[#3a3a3a] px-[6px] pt-[6px]">
          <div className="h-16 w-4 rounded-full bg-[#777]" />
        </div>
      </div>
      <div className="mt-4 pr-11 text-right text-[24px] leading-8">
        <a href="#help" className="text-[#76b35a] underline underline-offset-4">
          More help on this function
        </a>
      </div>
    </aside>
  );
}

/* ------------------------------------------------------------------ */
/* Status bar                                                          */
/* ------------------------------------------------------------------ */

function StatusBar() {
  return (
    <footer className="flex h-11 items-center border-t border-black bg-linear-to-b from-[#4a4a4a] to-[#3d3d3d] pl-12 text-[24px] text-[#f0f0f0]">
      <span>Ready</span>
      <button type="button" className="ml-[38px] flex items-center gap-1">
        <Icon>
          <circle cx="14" cy="4" r="3" />
          <path d="M8 31V16q0-3-4-5t-1-5q3 0 5 2 6 3 12 0 5-4 6 0 0 3-5 5-2 1-2 7M8 31q3 1 4-4l2-7M17 25l5 6 10-12" />
        </Icon>
        Accessibility: Good to go
      </button>
      <div className="ml-auto flex h-full items-center text-white">
        <button type="button" aria-label="Normal view" className="flex h-full w-[74px] items-center justify-center bg-[#5b5b5b]">
          <Icon className="size-7">
            <path d="M2 2h28v28H2zM11 2v28M21 2v28M2 11h28M2 21h28" strokeWidth="2.500" />
          </Icon>
        </button>
        <button type="button" aria-label="Page layout view" className="flex w-[70px] items-center justify-center">
          <Icon className="size-7">
            <path d="M2 2h28v28H2zM8 6h16v20H8zM11 11h10M11 16h10M11 21h10" strokeWidth="2.500" />
          </Icon>
        </button>
        <button type="button" aria-label="Page break preview" className="flex w-[72px] items-center justify-center">
          <Icon className="size-7">
            <path d="M2 2h28v28H2zM11 2v17M20 2v17M2 19h18" strokeWidth="2.500" />
          </Icon>
        </button>
        <button type="button" aria-label="Zoom out" className="mr-[14px] ml-4 h-1 w-4 bg-white" />
        <input
          type="range"
          aria-label="Zoom"
          defaultValue={50}
          className="h-2 w-[200px] appearance-none rounded-full bg-[#717171] [&::-webkit-slider-thumb]:size-8 [&::-webkit-slider-thumb]:appearance-none [&::-webkit-slider-thumb]:rounded-full [&::-webkit-slider-thumb]:bg-[#a2a2a2]"
        />
        <button type="button" aria-label="Zoom in" className="ml-[14px]">
          <Icon className="size-4">
            <path d="M16 0v32M0 16h32" strokeWidth="8" />
          </Icon>
        </button>
        <span className="w-[146px] pl-[34px]">100%</span>
      </div>
    </footer>
  );
}

/* ------------------------------------------------------------------ */

function Wallpaper() {
  return (
    <svg viewBox="0 0 2880 200" preserveAspectRatio="none" className="absolute inset-x-0 bottom-0 h-[200px] w-full rounded-b-[20px]" aria-hidden="true">
      <defs>
        <linearGradient id="dune">
          <stop offset="0.180" stopColor="#c9c1f8" />
          <stop offset="0.220" stopColor="#dcd7fa" />
          <stop offset="0.300" stopColor="#faf9fd" />
        </linearGradient>
      </defs>
      <path d="M0 0h2880v200H0z" fill="url(#dune)" />
      <path d="M0 0h541q2 100-11 200H0z" fill="#e3e0fd" />
    </svg>
  );
}

export default function App() {
  const [tab, setTab] = useState('Home');
  const [sheet, setSheet] = useState('Scenario 1');

  return (
    <div className="relative flex min-h-screen flex-col overflow-hidden bg-linear-to-r from-[#120c48] to-[#2a189c] font-['Inter',sans-serif]">
      <Wallpaper />
      <div className="relative">
        <MenuBar />
        <main className="overflow-hidden rounded-[20px] border-y-2 border-[#6a6a6a] bg-[#282828] shadow-[0_0_0_1px_#000,0_36px_100px_rgba(0,0,0,0.75)]">
          <TitleBar />
          <RibbonTabs active={tab} onSelect={setTab} />
          <Ribbon />
          <UpdateNotice />
          <FormulaBar />
          <div className="flex">
            <div className="flex min-w-0 flex-1 flex-col bg-[#2b2b2b]">
              <div className="flex">
                <Sheet />
                <div className="w-[30px] shrink-0 px-2 pt-1">
                  <div className="h-[987px] w-[18px] rounded-full bg-[#6b6b6b]" />
                </div>
              </div>
              <div className="h-[30px] px-1 pt-2">
                <div className="h-[18px] w-[748px] rounded-full bg-[#6b6b6b]" />
              </div>
              <SheetTabs active={sheet} onSelect={setSheet} />
            </div>
            <FormulaBuilder />
          </div>
          <StatusBar />
        </main>
      </div>
    </div>
  );
}
